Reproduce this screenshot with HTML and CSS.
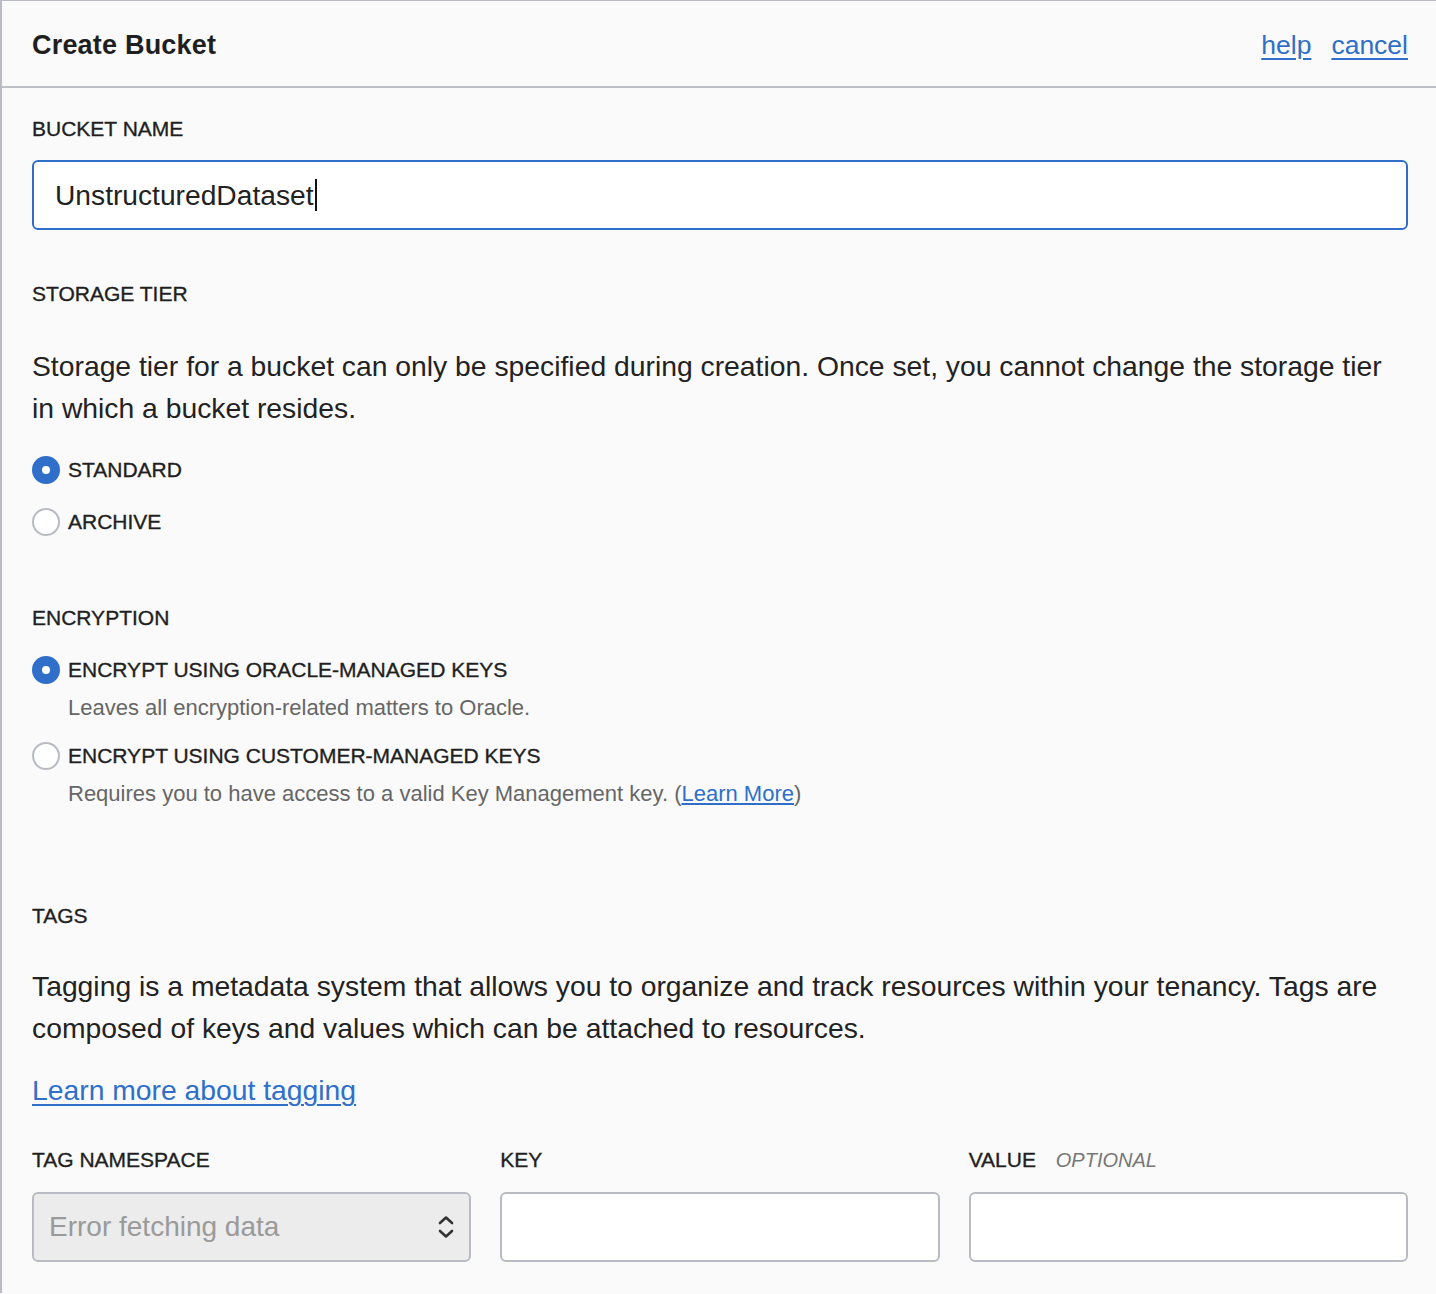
FILE: index.html
```html
<!DOCTYPE html>
<html lang="en">
<head>
<meta charset="utf-8">
<title>Create Bucket</title>
<link rel="stylesheet" href="styles.css">
</head>
<body>
<div class="panel">
  <header class="head">
    <h1 class="title">Create Bucket</h1>
    <nav class="head-links">
      <a href="#" class="head-link">help</a>
      <a href="#" class="head-link">cancel</a>
    </nav>
  </header>
  <main class="body">
    <div class="label label-first">BUCKET NAME</div>
    <div class="input input-focus"><span class="input-text">UnstructuredDataset</span><span class="caret"></span></div>

    <div class="label label-storage">STORAGE TIER</div>
    <p class="para para-storage">Storage tier for a bucket can only be specified during creation. Once set, you cannot change the storage tier in which a bucket resides.</p>

    <div class="radio-row radio-first"><span class="radio radio-on"></span><span class="radio-label">STANDARD</span></div>
    <div class="radio-row radio-next"><span class="radio"></span><span class="radio-label">ARCHIVE</span></div>

    <div class="label label-enc">ENCRYPTION</div>
    <div class="radio-row radio-enc"><span class="radio radio-on"></span><span class="radio-label">ENCRYPT USING ORACLE-MANAGED KEYS</span></div>
    <div class="desc">Leaves all encryption-related matters to Oracle.</div>
    <div class="radio-row radio-enc2"><span class="radio"></span><span class="radio-label">ENCRYPT USING CUSTOMER-MANAGED KEYS</span></div>
    <div class="desc">Requires you to have access to a valid Key Management key. (<a href="#" class="desc-link">Learn More</a>)</div>

    <div class="label label-tags">TAGS</div>
    <p class="para para-tags">Tagging is a metadata system that allows you to organize and track resources within your tenancy. Tags are composed of keys and values which can be attached to resources.</p>
    <a href="#" class="big-link">Learn more about tagging</a>

    <div class="tag-grid">
      <div class="tag-col">
        <div class="label">TAG NAMESPACE</div>
        <div class="input input-select"><span class="select-text">Error fetching data</span>
          <svg class="chev" width="18" height="32" viewBox="0 0 18 32"><path d="M3 12 L9 6.5 L15 12" fill="none" stroke="#333" stroke-width="2.6" stroke-linecap="round" stroke-linejoin="round"/><path d="M3 20 L9 25.5 L15 20" fill="none" stroke="#333" stroke-width="2.6" stroke-linecap="round" stroke-linejoin="round"/></svg>
        </div>
      </div>
      <div class="tag-col">
        <div class="label">KEY</div>
        <div class="input"></div>
      </div>
      <div class="tag-col">
        <div class="label">VALUE <span class="optional">OPTIONAL</span></div>
        <div class="input"></div>
      </div>
    </div>
  </main>
</div>
</body>
</html>
```
FILE: styles.css
```css
html, body {
  margin: 0;
  padding: 0;
  background: #fafafa;
}
body {
  font-family: "Liberation Sans", Arial, sans-serif;
  color: #222;
}
.panel {
  border-left: 2px solid #b9bdc3;
  border-top: 1px solid #b9bdc3;
  min-height: 1293px;
  box-sizing: border-box;
}
.head {
  height: 87px;
  border-bottom: 2px solid #bec2c7;
  display: flex;
  align-items: center;
  justify-content: space-between;
  padding: 3px 28px 0 30px;
  box-sizing: border-box;
}
.title {
  margin: 0;
  font-size: 27px;
  font-weight: 700;
  letter-spacing: 0.2px;
  color: #1f1f1f;
}
.head-links {
  display: flex;
  gap: 20px;
}
.head-link {
  font-size: 26.5px;
  color: #2f6fc9;
  text-decoration: underline;
  text-underline-offset: 4px;
  text-decoration-thickness: 2px;
}
.body {
  padding: 0 28px 0 30px;
  display: flex;
  flex-direction: column;
}
.label {
  font-size: 21px;
  line-height: 24px;
  color: #1f1f1f;
  -webkit-text-stroke: 0.35px #1f1f1f;
}
.label-first { margin-top: 29px; }
.label-storage { margin-top: 52px; }
.label-enc { margin-top: 70px; }
.label-tags { margin-top: 96px; }
.optional {
  margin-left: 14px;
  font-style: italic;
  font-size: 20px;
  color: #777;
  -webkit-text-stroke: 0;
  font-weight: 300;
}
.input {
  height: 70px;
  box-sizing: border-box;
  border: 2px solid #b8bcc2;
  border-radius: 6px;
  background: #fff;
  margin-top: 19px;
  display: flex;
  align-items: center;
}
.input-focus {
  border-color: #2f6fc9;
  padding-left: 21px;
}
.input-text {
  font-size: 28.2px;
  color: #222;
}
.caret {
  display: inline-block;
  width: 2px;
  height: 32px;
  background: #111;
  margin-left: 1px;
}
.para {
  margin: 0;
  font-size: 28.3px;
  line-height: 42px;
  color: #222;
}
.para-storage { margin-top: 39px; }
.para-tags { margin-top: 37px; }
.radio-row {
  display: flex;
  align-items: center;
  height: 28px;
  gap: 8px;
}
.radio-first { margin-top: 27px; }
.radio-next { margin-top: 24px; }
.radio-enc { margin-top: 26px; }
.radio-enc2 { margin-top: 20px; }
.radio {
  width: 28px;
  height: 28px;
  border-radius: 50%;
  box-sizing: border-box;
  border: 2px solid #b8bcc2;
  background: #fff;
  flex: none;
}
.radio-on {
  border: 10px solid #2f6fc9;
  background: #fff;
}
.radio-label {
  font-size: 21px;
  color: #1f1f1f;
  -webkit-text-stroke: 0.35px #1f1f1f;
}
.desc {
  margin-top: 10px;
  padding-left: 36px;
  font-size: 22px;
  line-height: 28px;
  color: #666;
}
.desc-link {
  color: #2f6fc9;
  text-decoration: underline;
}
.big-link {
  margin-top: 21px;
  align-self: flex-start;
  font-size: 28.3px;
  line-height: 40px;
  color: #2f6fc9;
  text-decoration: underline;
  text-underline-offset: 4px;
  text-decoration-thickness: 2px;
}
.tag-grid {
  margin-top: 38px;
  display: grid;
  grid-template-columns: repeat(3, 1fr);
  column-gap: 29px;
}
.tag-col .input { margin-top: 20px; }
.input-select {
  background: #ececec;
  padding: 0 14px 0 15px;
  justify-content: space-between;
}
.select-text {
  font-size: 28px;
  color: #9a9a9a;
}
.chev { display: block; }
```
